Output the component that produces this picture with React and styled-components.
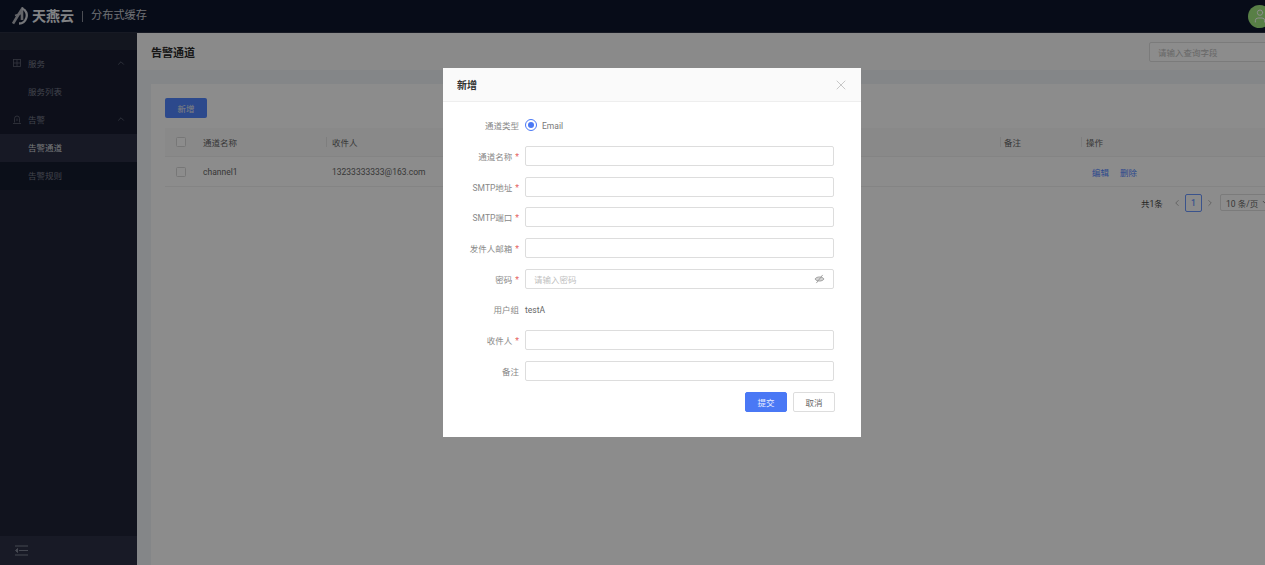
import React from "react";
import styled, { createGlobalStyle } from "styled-components";
import { ChevronUp, ChevronDown, ChevronLeft, ChevronRight, X, User } from "lucide-react";

const Global = createGlobalStyle`
  html, body { margin: 0; padding: 0; width: 1265px; height: 565px; overflow: hidden; background: #fff; }
  * { box-sizing: border-box; }
  body { font-family: Roboto, "Noto Sans CJK SC", sans-serif; font-size: 8.5px; color: #333; }
`;

const Page = styled.div`
  position: relative;
  width: 1280px;
  height: 565px;
  display: flex;
  flex-direction: column;
  overflow: hidden;
`;
const Header = styled.header`
  height: 33px;
  flex: none;
  background: #0d162d;
  border-bottom: 1px solid #2a3042;
  display: flex;
  align-items: center;
  padding: 0 9px 0 12px;
`;
const LogoText = styled.span`
  margin-left: 4px;
  font-size: 14px;
  font-weight: 700;
  color: #eceef2;
  line-height: 1;
`;
const HeaderDivider = styled.span`
  width: 1px;
  height: 11px;
  margin: 0 8px;
  background: #8b8f99;
`;
const ProductName = styled.span`
  font-size: 11.2px;
  color: #c9ccd3;
  line-height: 1;
`;
const Avatar = styled.span`
  margin-left: auto;
  width: 23px;
  height: 23px;
  border-radius: 50%;
  background: #a0e880;
  display: flex;
  align-items: center;
  justify-content: center;
  color: #fff;
`;
const Body = styled.div`
  flex: 1;
  display: flex;
  min-height: 0;
`;
const Sidebar = styled.aside`
  width: 137px;
  flex: none;
  background: #1f2438;
  display: flex;
  flex-direction: column;
`;
const SideTop = styled.div`
  height: 17px;
  background: #232839;
`;
const SideMenu = styled.nav`
  background: #181d30;
`;
const SideItem = styled.div`
  height: 28px;
  display: flex;
  align-items: center;
  padding: 0 11px 2px ${p => (p.$sub ? "28px" : "13px")};
  gap: 7px;
  color: ${p => (p.$active ? "#d8d9dd" : "#777b8b")};
  background: ${p => (p.$active ? "#2a2f44" : p.$dark ? "#151c2e" : "transparent")};
  font-size: 8.5px;
  svg { color: #5f6373; flex: none; }
  svg:last-child:not(:first-child) { margin-left: auto; }
`;
const SideFooter = styled.div`
  margin-top: auto;
  height: 29px;
  background: #2c3145;
  display: flex;
  align-items: center;
  padding: 0 0 0 15px;
  color: #7f8394;
`;
const Main = styled.main`
  flex: 1;
  min-width: 0;
  background: #f0f4f7;
  display: flex;
  flex-direction: column;
`;
const TitleBar = styled.div`
  height: 37px;
  flex: none;
  background: #fbfbfb;
  display: flex;
  align-items: center;
  justify-content: space-between;
  padding: 0 0 0 14px;
`;
const PageTitle = styled.h1`
  margin: 0;
  font-size: 11px;
  font-weight: 700;
  color: #2b2b2b;
`;
const Search = styled.div`
  width: 131px;
  height: 20px;
  margin-top: 1px;
  border: 1px solid #e0e0e0;
  border-radius: 2px;
  background: #fff;
  padding-left: 8px;
  display: flex;
  align-items: center;
  color: #bdbdbd;
  font-size: 8.5px;
`;
const Content = styled.div`
  flex: 1;
  padding: 14px 0 0 14px;
  min-height: 0;
`;
const Card = styled.section`
  height: 100%;
  background: #fff;
  padding: 14px 0 0 14px;
`;
const AddButton = styled.div`
  width: 42px;
  height: 20px;
  border-radius: 2px;
  background: #5085ff;
  color: #e8e8e8;
  display: flex;
  align-items: center;
  justify-content: center;
  font-size: 8.5px;
`;
const Table = styled.div`
  margin-top: 10px;
`;
const Row = styled.div`
  height: ${p => (p.$head ? 29 : 30)}px;
  display: grid;
  grid-template-columns: 161px 674px 81px 1fr;
  align-items: center;
  background: ${p => (p.$head ? "#fafafa" : "#fff")};
  border-bottom: 1px solid #f0f0f0;
`;
const Cell = styled.div`
  position: relative;
  display: flex;
  align-items: center;
  padding-left: ${p => p.$pad || 6}px;
  color: #666;
  font-size: 8.5px;
  height: 100%;
  ${p => p.$divider && `&::before { content: ""; position: absolute; left: 0; top: 9px; bottom: 9px; width: 1px; background: #e5e5e5; }`}
`;
const Check = styled.span`
  width: 10px;
  height: 10px;
  flex: none;
  border: 1px solid #d9d9d9;
  border-radius: 1.5px;
  background: #fff;
  margin-right: 17px;
`;
const LinkText = styled.span`
  color: #5085ff;
  margin-left: ${p => p.$ml || 0}px;
`;
const Pager = styled.div`
  height: 31px;
  display: flex;
  align-items: center;
  padding-left: 976px;
  color: #444;
  font-size: 8.5px;
  white-space: nowrap;
`;
const PagerNum = styled.span`
  width: 17px;
  height: 18px;
  margin: 0 3px;
  border: 1px solid #6a98ff;
  border-radius: 2px;
  display: flex;
  align-items: center;
  justify-content: center;
  color: #6a98ff;
  font-weight: 500;
  flex: none;
`;
const PagerSelect = styled.span`
  width: 60px;
  height: 17px;
  margin-left: 5px;
  border: 1px solid #e0e0e0;
  border-radius: 2px;
  padding-left: 5px;
  display: flex;
  align-items: center;
  gap: 3px;
  color: #666;
  flex: none;
`;
const PagerTotal = styled.span`
  width: 31px;
  flex: none;
`;
const Overlay = styled.div`
  position: absolute;
  inset: 0;
  background: rgba(0, 0, 0, 0.45);
  padding: 68px 0 0 443px;
`;
const Modal = styled.div`
  width: 418px;
  height: 369px;
  background: #fff;
  display: flex;
  flex-direction: column;
`;
const ModalHead = styled.div`
  height: 34px;
  flex: none;
  background: #fafafa;
  border-bottom: 1px solid #eee;
  display: flex;
  align-items: center;
  justify-content: space-between;
  padding: 0 12px 0 14px;
  color: #999;
`;
const ModalTitle = styled.h2`
  margin: 0;
  font-size: 10px;
  font-weight: 700;
  color: #333;
`;
const Form = styled.div`
  padding: 13.3px 27px 0 0;
  display: grid;
  grid-template-columns: 76px 1fr;
  column-gap: 6px;
  grid-auto-rows: 20px;
  row-gap: 10.7px;
  align-items: center;
`;
const Label = styled.div`
  color: #888;
  font-size: 8.5px;
  white-space: nowrap;
  display: flex;
  justify-content: flex-end;
  gap: 3px;
`;
const Star = styled.span`
  color: #e5625c;
  font-size: 8.5px;
  transform: translateY(1.5px);
`;
const Input = styled.div`
  height: 20px;
  border: 1px solid #ddd;
  border-radius: 2px;
  background: #fff;
  padding: 0 8px;
  display: flex;
  align-items: center;
  justify-content: space-between;
  color: #bfbfbf;
  font-size: 8.5px;
`;
const RadioWrap = styled.div`
  display: flex;
  align-items: center;
  gap: 5px;
  color: #777;
`;
const RadioLabel = styled.span`
  padding-top: 2px;
`;
const RadioDot = styled.span`
  width: 12px;
  height: 12px;
  border-radius: 50%;
  border: 1px solid #4a78f5;
  display: flex;
  align-items: center;
  justify-content: center;
  &::after { content: ""; width: 6px; height: 6px; border-radius: 50%; background: #4a78f5; }
`;
const Plain = styled.div`
  color: #666;
  padding-top: 2px;
`;
const Actions = styled.div`
  display: flex;
  justify-content: flex-end;
  gap: 6px;
  padding: 11px 26px 0 0;
`;
const ModalButton = styled.div`
  width: 42px;
  height: 20px;
  border-radius: 2px;
  display: flex;
  align-items: center;
  justify-content: center;
  font-size: 8.5px;
  background: ${p => (p.$primary ? "#4a78f5" : "#fff")};
  color: ${p => (p.$primary ? "#e8eeff" : "#666")};
  border: 1px solid ${p => (p.$primary ? "#4a78f5" : "#ddd")};
`;

const Logo = () => (
  <svg width="16" height="18" viewBox="0 0 16 18" fill="none">
    <path d="M1 16.5 L5 10 L10 2 L10 13" stroke="#b4b7bd" strokeWidth="2.6" />
    <path d="M3 8.5 L9 6.5" stroke="#b4b7bd" strokeWidth="1.5" />
    <path d="M10 1.5 C14.5 3 15.5 7.5 14.3 11 C13.2 14.5 10.5 16.5 7 16.5" stroke="#d5d7dc" strokeWidth="2.3" />
  </svg>
);
const EyeOff = () => (
  <svg width="11" height="10" viewBox="0 0 12 11" fill="#d4d4d4" stroke="#9a9a9a" strokeWidth="1">
    <path d="M1 5.5 C3 2.5 9 2.5 11 5.5 C9 8.5 3 8.5 1 5.5 Z" />
    <path d="M2.5 10 L9.5 1" />
  </svg>
);
const Collapse = () => (
  <svg width="13" height="11" viewBox="0 0 13 11" fill="none" stroke="currentColor" strokeWidth="1">
    <path d="M0 1h13M4 5.5h9M0 10h13" />
    <path d="M2.5 3.5 L0.5 5.5 L2.5 7.5 Z" fill="currentColor" />
  </svg>
);
const ServiceIcon = () => (
  <svg width="8" height="8" viewBox="0 0 8 8" fill="none" stroke="currentColor" strokeWidth="0.8">
    <rect x="0.5" y="0.5" width="7" height="7" />
    <path d="M4 0.5V7.5M0.5 4H7.5" />
  </svg>
);
const AlarmIcon = () => (
  <svg width="8" height="9" viewBox="0 0 8 9" fill="none" stroke="currentColor" strokeWidth="0.8">
    <path d="M1.5 7.5V3.5A2.5 2.5 0 0 1 6.5 3.5V7.5" />
    <path d="M0 8.5H8M4 3.5V6" />
  </svg>
);

const fields = ["通道名称", "SMTP地址", "SMTP端口", "发件人邮箱"];

export default function App() {
  return (
    <Page>
      <Global />
      <Header>
        <Logo />
        <LogoText>天燕云</LogoText>
        <HeaderDivider />
        <ProductName>分布式缓存</ProductName>
        <Avatar><User size={16} strokeWidth={1.5} /></Avatar>
      </Header>
      <Body>
        <Sidebar>
          <SideTop />
          <SideMenu>
            <SideItem><ServiceIcon />服务<ChevronUp size={10} /></SideItem>
            <SideItem $sub>服务列表</SideItem>
            <SideItem><AlarmIcon />告警<ChevronUp size={10} /></SideItem>
            <SideItem $sub $active>告警通道</SideItem>
            <SideItem $sub $dark>告警规则</SideItem>
          </SideMenu>
          <SideFooter><Collapse /></SideFooter>
        </Sidebar>
        <Main>
          <TitleBar>
            <PageTitle>告警通道</PageTitle>
            <Search>请输入查询字段</Search>
          </TitleBar>
          <Content>
            <Card>
              <AddButton>新增</AddButton>
              <Table>
                <Row $head>
                  <Cell $pad={11}><Check />通道名称</Cell>
                  <Cell $divider>收件人</Cell>
                  <Cell $divider $pad={4}>备注</Cell>
                  <Cell $divider $pad={5}>操作</Cell>
                </Row>
                <Row>
                  <Cell $pad={11}><Check />channel1</Cell>
                  <Cell>13233333333@163.com</Cell>
                  <Cell />
                  <Cell $pad={11}><LinkText>编辑</LinkText><LinkText $ml={11}>删除</LinkText></Cell>
                </Row>
              </Table>
              <Pager>
                <PagerTotal>共1条</PagerTotal>
                <ChevronLeft size={10} color="#aaa" />
                <PagerNum>1</PagerNum>
                <ChevronRight size={10} color="#aaa" />
                <PagerSelect>10 条/页<ChevronDown size={9} /></PagerSelect>
              </Pager>
            </Card>
          </Content>
        </Main>
      </Body>
      <Overlay>
        <Modal>
          <ModalHead>
            <ModalTitle>新增</ModalTitle>
            <X size={16} strokeWidth={0.8} />
          </ModalHead>
          <Form>
            <Label>通道类型</Label>
            <RadioWrap><RadioDot /><RadioLabel>Email</RadioLabel></RadioWrap>
            {fields.map(l => (
              <React.Fragment key={l}>
                <Label>{l}<Star>*</Star></Label>
                <Input />
              </React.Fragment>
            ))}
            <Label>密码<Star>*</Star></Label>
            <Input>请输入密码<EyeOff /></Input>
            <Label>用户组</Label>
            <Plain>testA</Plain>
            <Label>收件人<Star>*</Star></Label>
            <Input />
            <Label>备注</Label>
            <Input />
          </Form>
          <Actions>
            <ModalButton $primary>提交</ModalButton>
            <ModalButton>取消</ModalButton>
          </Actions>
        </Modal>
      </Overlay>
    </Page>
  );
}
